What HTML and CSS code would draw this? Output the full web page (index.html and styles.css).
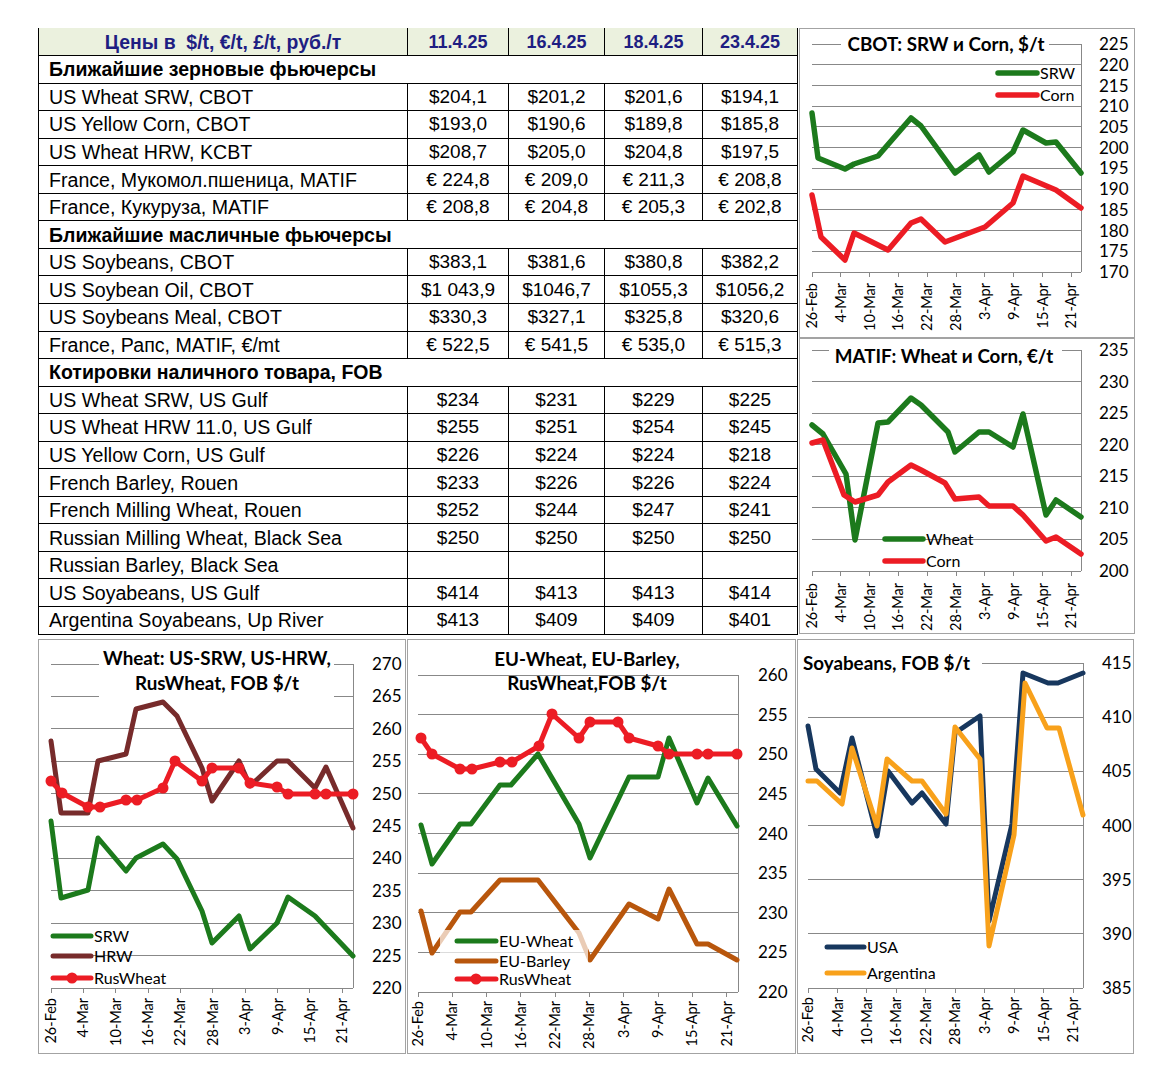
FILE: index.html
```html
<!DOCTYPE html>
<html lang="ru">
<head>
<meta charset="utf-8">
<title>Цены</title>
<link rel="stylesheet" href="styles.css">
</head>
<body>
<div class="page">
  <div class="top">
    <table class="prices">
      <colgroup>
        <col class="c-label"><col class="c1"><col class="c2"><col class="c3"><col class="c4">
      </colgroup>
      <tr class="head">
        <th class="head-label">Цены в&nbsp; $/t, €/t, £/t, руб./т</th>
        <th>11.4.25</th><th>16.4.25</th><th>18.4.25</th><th>23.4.25</th>
      </tr>
      <tr class="section"><td colspan="5">Ближайшие зерновые фьючерсы</td></tr>
      <tr><td>US Wheat SRW, CBOT</td><td>$204,1</td><td>$201,2</td><td>$201,6</td><td>$194,1</td></tr>
      <tr><td>US Yellow Corn, CBOT</td><td>$193,0</td><td>$190,6</td><td>$189,8</td><td>$185,8</td></tr>
      <tr><td>US Wheat HRW, KCBT</td><td>$208,7</td><td>$205,0</td><td>$204,8</td><td>$197,5</td></tr>
      <tr><td>France, Мукомол.пшеница, MATIF</td><td>€ 224,8</td><td>€ 209,0</td><td>€ 211,3</td><td>€ 208,8</td></tr>
      <tr><td>France, Кукуруза, MATIF</td><td>€ 208,8</td><td>€ 204,8</td><td>€ 205,3</td><td>€ 202,8</td></tr>
      <tr class="section"><td colspan="5">Ближайшие масличные фьючерсы</td></tr>
      <tr><td>US Soybeans, CBOT</td><td>$383,1</td><td>$381,6</td><td>$380,8</td><td>$382,2</td></tr>
      <tr><td>US Soybean Oil, CBOT</td><td>$1 043,9</td><td>$1046,7</td><td>$1055,3</td><td>$1056,2</td></tr>
      <tr><td>US Soybeans Meal, CBOT</td><td>$330,3</td><td>$327,1</td><td>$325,8</td><td>$320,6</td></tr>
      <tr><td>France, Рапс, MATIF, €/mt</td><td>€ 522,5</td><td>€ 541,5</td><td>€ 535,0</td><td>€ 515,3</td></tr>
      <tr class="section"><td colspan="5">Котировки наличного товара, FOB</td></tr>
      <tr><td>US Wheat SRW, US Gulf</td><td>$234</td><td>$231</td><td>$229</td><td>$225</td></tr>
      <tr><td>US Wheat HRW 11.0, US Gulf</td><td>$255</td><td>$251</td><td>$254</td><td>$245</td></tr>
      <tr><td>US Yellow Corn, US Gulf</td><td>$226</td><td>$224</td><td>$224</td><td>$218</td></tr>
      <tr><td>French Barley, Rouen</td><td>$233</td><td>$226</td><td>$226</td><td>$224</td></tr>
      <tr><td>French Milling Wheat, Rouen</td><td>$252</td><td>$244</td><td>$247</td><td>$241</td></tr>
      <tr><td>Russian Milling Wheat, Black Sea</td><td>$250</td><td>$250</td><td>$250</td><td>$250</td></tr>
      <tr><td>Russian Barley, Black Sea</td><td></td><td></td><td></td><td></td></tr>
      <tr><td>US Soyabeans, US Gulf</td><td>$414</td><td>$413</td><td>$413</td><td>$414</td></tr>
      <tr><td>Argentina Soyabeans, Up River</td><td>$413</td><td>$409</td><td>$409</td><td>$401</td></tr>
    </table>

    <div class="side">
      <div class="chart chart-cbot">
        <svg width="334" height="308" viewBox="799 29 334 308">
          <g class="grid">
            <line x1="811" x2="840" y1="44" y2="44"/><line x1="1048" x2="1080" y1="44" y2="44"/>
            <line x1="811" x2="1080" y1="64.7" y2="64.7"/>
            <line x1="811" x2="1080" y1="85.5" y2="85.5"/>
            <line x1="811" x2="1080" y1="106.2" y2="106.2"/>
            <line x1="811" x2="1080" y1="126.9" y2="126.9"/>
            <line x1="811" x2="1080" y1="147.6" y2="147.6"/>
            <line x1="811" x2="1080" y1="168.4" y2="168.4"/>
            <line x1="811" x2="1080" y1="189.1" y2="189.1"/>
            <line x1="811" x2="1080" y1="209.8" y2="209.8"/>
            <line x1="811" x2="1080" y1="230.5" y2="230.5"/>
            <line x1="811" x2="1080" y1="251.3" y2="251.3"/>
            <line x1="811" x2="1080" y1="272" y2="272"/>
            <line x1="1080" x2="1080" y1="44" y2="272"/>
            <line x1="811" x2="811" y1="272" y2="277"/><line x1="839.8" x2="839.8" y1="272" y2="277"/>
            <line x1="868.6" x2="868.6" y1="272" y2="277"/><line x1="897.4" x2="897.4" y1="272" y2="277"/>
            <line x1="926.3" x2="926.3" y1="272" y2="277"/><line x1="955.1" x2="955.1" y1="272" y2="277"/>
            <line x1="983.9" x2="983.9" y1="272" y2="277"/><line x1="1012.7" x2="1012.7" y1="272" y2="277"/>
            <line x1="1041.5" x2="1041.5" y1="272" y2="277"/><line x1="1070.4" x2="1070.4" y1="272" y2="277"/>
          </g>
          <text class="ttl" x="945" y="51" text-anchor="middle">CBOT: SRW и Corn, $/t</text>
          <g class="yl">
            <text x="1098" y="50">225</text><text x="1098" y="70.7">220</text><text x="1098" y="91.5">215</text>
            <text x="1098" y="112.2">210</text><text x="1098" y="132.9">205</text><text x="1098" y="153.6">200</text>
            <text x="1098" y="174.4">195</text><text x="1098" y="195.1">190</text><text x="1098" y="215.8">185</text>
            <text x="1098" y="236.5">180</text><text x="1098" y="257.3">175</text><text x="1098" y="278">170</text>
          </g>
          <g class="xl" text-anchor="end">
            <text transform="translate(816,283) rotate(-90)">26-Feb</text>
            <text transform="translate(844.8,283) rotate(-90)">4-Mar</text>
            <text transform="translate(873.6,283) rotate(-90)">10-Mar</text>
            <text transform="translate(902.4,283) rotate(-90)">16-Mar</text>
            <text transform="translate(931.3,283) rotate(-90)">22-Mar</text>
            <text transform="translate(960.1,283) rotate(-90)">28-Mar</text>
            <text transform="translate(988.9,283) rotate(-90)">3-Apr</text>
            <text transform="translate(1017.7,283) rotate(-90)">9-Apr</text>
            <text transform="translate(1046.5,283) rotate(-90)">15-Apr</text>
            <text transform="translate(1075.4,283) rotate(-90)">21-Apr</text>
          </g>
          <polyline class="s green" points="811,113 817,158 844,169 853,164 877,156 910,118 920,126 954,173 978,155 988,172 1012,152 1022,130 1045,143 1055,142 1080,173"/>
          <polyline class="s red" points="811,195 820,237 844,260 853,233 887,250 910,223 920,219 944,242 984,227 1012,203 1022,176 1055,190 1080,208"/>
          <line class="s green" x1="997" x2="1036" y1="73" y2="73"/>
          <line class="s red" x1="997" x2="1036" y1="95" y2="95"/>
          <g class="lg"><text x="1039" y="79">SRW</text><text x="1039" y="101">Corn</text></g>
        </svg>
      </div>
      <div class="chart chart-matif">
        <svg width="334" height="294" viewBox="799 339 334 294">
          <g class="grid">
            <line x1="811" x2="828" y1="350" y2="350"/><line x1="1061" x2="1080" y1="350" y2="350"/>
            <line x1="811" x2="1080" y1="381.6" y2="381.6"/>
            <line x1="811" x2="1080" y1="413.1" y2="413.1"/>
            <line x1="811" x2="1080" y1="444.7" y2="444.7"/>
            <line x1="811" x2="1080" y1="476.3" y2="476.3"/>
            <line x1="811" x2="1080" y1="507.8" y2="507.8"/>
            <line x1="811" x2="1080" y1="539.4" y2="539.4"/>
            <line x1="811" x2="1080" y1="571" y2="571"/>
            <line x1="1080" x2="1080" y1="350" y2="571"/>
            <line x1="811" x2="811" y1="571" y2="576"/><line x1="839.8" x2="839.8" y1="571" y2="576"/>
            <line x1="868.6" x2="868.6" y1="571" y2="576"/><line x1="897.4" x2="897.4" y1="571" y2="576"/>
            <line x1="926.3" x2="926.3" y1="571" y2="576"/><line x1="955.1" x2="955.1" y1="571" y2="576"/>
            <line x1="983.9" x2="983.9" y1="571" y2="576"/><line x1="1012.7" x2="1012.7" y1="571" y2="576"/>
            <line x1="1041.5" x2="1041.5" y1="571" y2="576"/><line x1="1070.4" x2="1070.4" y1="571" y2="576"/>
          </g>
          <text class="ttl" x="943" y="363" text-anchor="middle">MATIF: Wheat и Corn, €/t</text>
          <g class="yl">
            <text x="1098" y="356">235</text><text x="1098" y="387.6">230</text><text x="1098" y="419.1">225</text>
            <text x="1098" y="450.7">220</text><text x="1098" y="482.3">215</text><text x="1098" y="513.8">210</text>
            <text x="1098" y="545.4">205</text><text x="1098" y="577">200</text>
          </g>
          <g class="xl" text-anchor="end">
            <text transform="translate(816,583) rotate(-90)">26-Feb</text>
            <text transform="translate(844.8,583) rotate(-90)">4-Mar</text>
            <text transform="translate(873.6,583) rotate(-90)">10-Mar</text>
            <text transform="translate(902.4,583) rotate(-90)">16-Mar</text>
            <text transform="translate(931.3,583) rotate(-90)">22-Mar</text>
            <text transform="translate(960.1,583) rotate(-90)">28-Mar</text>
            <text transform="translate(988.9,583) rotate(-90)">3-Apr</text>
            <text transform="translate(1017.7,583) rotate(-90)">9-Apr</text>
            <text transform="translate(1046.5,583) rotate(-90)">15-Apr</text>
            <text transform="translate(1075.4,583) rotate(-90)">21-Apr</text>
          </g>
          <polyline class="s green" points="811,425 822,434 845,474 854,540 877,423 887,422 910,398 920,405 947,432 954,452 978,432 988,432 1012,447 1022,414 1045,515 1055,500 1080,517"/>
          <polyline class="s red" points="811,443 822,440 843,495 854,502 877,495 887,482 910,465 920,470 944,483 954,499 978,497 988,506 1012,506 1022,515 1045,541 1055,537 1080,554"/>
          <line class="s green" x1="884" x2="922" y1="539" y2="539"/>
          <line class="s red" x1="884" x2="922" y1="561" y2="561"/>
          <g class="lg"><text x="925" y="545">Wheat</text><text x="925" y="567">Corn</text></g>
        </svg>
      </div>
    </div>
  </div>

  <div class="bottom">
    <div class="chart chart-wheat">
      <svg width="366" height="413" viewBox="39 639 366 413">
        <g class="grid">
          <line x1="51" x2="99" y1="663" y2="663"/><line x1="334" x2="353" y1="663" y2="663"/>
          <line x1="51" x2="99" y1="695.4" y2="695.4"/><line x1="334" x2="353" y1="695.4" y2="695.4"/>
          <line x1="51" x2="353" y1="727.8" y2="727.8"/>
          <line x1="51" x2="353" y1="760.2" y2="760.2"/>
          <line x1="51" x2="353" y1="792.6" y2="792.6"/>
          <line x1="51" x2="353" y1="825" y2="825"/>
          <line x1="51" x2="353" y1="857.4" y2="857.4"/>
          <line x1="51" x2="353" y1="889.8" y2="889.8"/>
          <line x1="51" x2="353" y1="922.2" y2="922.2"/>
          <line x1="51" x2="353" y1="954.6" y2="954.6"/>
          <line x1="51" x2="353" y1="987" y2="987"/>
          <line x1="353" x2="353" y1="663" y2="987"/>
          <line x1="51" x2="51" y1="987" y2="992"/><line x1="83.4" x2="83.4" y1="987" y2="992"/>
          <line x1="115.7" x2="115.7" y1="987" y2="992"/><line x1="148.1" x2="148.1" y1="987" y2="992"/>
          <line x1="180.4" x2="180.4" y1="987" y2="992"/><line x1="212.8" x2="212.8" y1="987" y2="992"/>
          <line x1="245.1" x2="245.1" y1="987" y2="992"/><line x1="277.5" x2="277.5" y1="987" y2="992"/>
          <line x1="309.9" x2="309.9" y1="987" y2="992"/><line x1="342.2" x2="342.2" y1="987" y2="992"/>
        </g>
        <text class="ttl" x="217" y="664" text-anchor="middle">Wheat: US-SRW, US-HRW,</text>
        <text class="ttl" x="217" y="689" text-anchor="middle">RusWheat, FOB $/t</text>
        <g class="yl">
          <text x="372" y="669">270</text><text x="372" y="701.4">265</text><text x="372" y="733.8">260</text>
          <text x="372" y="766.2">255</text><text x="372" y="798.6">250</text><text x="372" y="831">245</text>
          <text x="372" y="863.4">240</text><text x="372" y="895.8">235</text><text x="372" y="928.2">230</text>
          <text x="372" y="960.6">225</text><text x="372" y="993">220</text>
        </g>
        <g class="xl" text-anchor="end">
          <text transform="translate(56,997) rotate(-90)">26-Feb</text>
          <text transform="translate(88.4,997) rotate(-90)">4-Mar</text>
          <text transform="translate(120.7,997) rotate(-90)">10-Mar</text>
          <text transform="translate(153.1,997) rotate(-90)">16-Mar</text>
          <text transform="translate(185.4,997) rotate(-90)">22-Mar</text>
          <text transform="translate(217.8,997) rotate(-90)">28-Mar</text>
          <text transform="translate(250.1,997) rotate(-90)">3-Apr</text>
          <text transform="translate(282.5,997) rotate(-90)">9-Apr</text>
          <text transform="translate(314.9,997) rotate(-90)">15-Apr</text>
          <text transform="translate(347.2,997) rotate(-90)">21-Apr</text>
        </g>
        <polyline class="s green thin" points="51,820 61,897 88,889 98,837 126,870 136,857 163,843 177,858 202,910 212,942 239,915 250,948 277,922 288,896 315,915 353,955"/>
        <polyline class="s brown thin" points="51,740 61,812 88,812 98,760 126,753 136,708 163,701 177,715 202,767 212,800 239,760 250,785 277,760 288,760 315,787 326,766 353,827"/>
        <polyline class="s red thin" points="51,780 62,792 88,806 100,806 126,799 137,799 163,787 175,760 202,780 212,767 239,767 250,782 277,786 288,793 315,793 326,793 353,793"/>
        <g class="dots">
          <circle cx="51" cy="780" r="5.5"/><circle cx="62" cy="792" r="5.5"/><circle cx="88" cy="806" r="5.5"/>
          <circle cx="100" cy="806" r="5.5"/><circle cx="126" cy="799" r="5.5"/><circle cx="137" cy="799" r="5.5"/>
          <circle cx="163" cy="787" r="5.5"/><circle cx="175" cy="760" r="5.5"/><circle cx="202" cy="780" r="5.5"/>
          <circle cx="212" cy="767" r="5.5"/><circle cx="239" cy="767" r="5.5"/><circle cx="250" cy="782" r="5.5"/>
          <circle cx="277" cy="786" r="5.5"/><circle cx="288" cy="793" r="5.5"/><circle cx="315" cy="793" r="5.5"/>
          <circle cx="326" cy="793" r="5.5"/><circle cx="353" cy="793" r="5.5"/>
          <circle cx="72" cy="977" r="5.5"/>
        </g>
        <line class="s green thin" x1="53" x2="91" y1="935" y2="935"/>
        <line class="s brown thin" x1="53" x2="91" y1="955" y2="955"/>
        <line class="s red thin" x1="53" x2="91" y1="977" y2="977"/>
        <g class="lg"><text x="94" y="941">SRW</text><text x="94" y="961">HRW</text><text x="94" y="983">RusWheat</text></g>
      </svg>
    </div>

    <div class="chart chart-eu">
      <svg width="387" height="413" viewBox="408 639 387 413">
        <g class="grid">
          <line x1="418" x2="738" y1="674" y2="674"/>
          <line x1="418" x2="738" y1="713.6" y2="713.6"/>
          <line x1="418" x2="738" y1="753.3" y2="753.3"/>
          <line x1="418" x2="738" y1="792.9" y2="792.9"/>
          <line x1="418" x2="738" y1="832.5" y2="832.5"/>
          <line x1="418" x2="738" y1="872.1" y2="872.1"/>
          <line x1="418" x2="738" y1="911.8" y2="911.8"/>
          <line x1="418" x2="738" y1="951.4" y2="951.4"/>
          <line x1="418" x2="738" y1="991" y2="991"/>
          <line x1="738" x2="738" y1="674" y2="991"/>
          <line x1="418" x2="418" y1="991" y2="996"/><line x1="452.3" x2="452.3" y1="991" y2="996"/>
          <line x1="486.6" x2="486.6" y1="991" y2="996"/><line x1="520.9" x2="520.9" y1="991" y2="996"/>
          <line x1="555.1" x2="555.1" y1="991" y2="996"/><line x1="589.4" x2="589.4" y1="991" y2="996"/>
          <line x1="623.7" x2="623.7" y1="991" y2="996"/><line x1="658" x2="658" y1="991" y2="996"/>
          <line x1="692.3" x2="692.3" y1="991" y2="996"/><line x1="726.6" x2="726.6" y1="991" y2="996"/>
        </g>
        <text class="ttl" x="587" y="665" text-anchor="middle">EU-Wheat, EU-Barley,</text>
        <text class="ttl" x="587" y="689" text-anchor="middle">RusWheat,FOB $/t</text>
        <g class="yl">
          <text x="758" y="680">260</text><text x="758" y="719.6">255</text><text x="758" y="759.3">250</text>
          <text x="758" y="798.9">245</text><text x="758" y="838.5">240</text><text x="758" y="878.1">235</text>
          <text x="758" y="917.8">230</text><text x="758" y="957.4">225</text><text x="758" y="997">220</text>
        </g>
        <g class="xl" text-anchor="end">
          <text transform="translate(423,1000) rotate(-90)">26-Feb</text>
          <text transform="translate(457.3,1000) rotate(-90)">4-Mar</text>
          <text transform="translate(491.6,1000) rotate(-90)">10-Mar</text>
          <text transform="translate(525.9,1000) rotate(-90)">16-Mar</text>
          <text transform="translate(560.1,1000) rotate(-90)">22-Mar</text>
          <text transform="translate(594.4,1000) rotate(-90)">28-Mar</text>
          <text transform="translate(628.7,1000) rotate(-90)">3-Apr</text>
          <text transform="translate(663,1000) rotate(-90)">9-Apr</text>
          <text transform="translate(697.3,1000) rotate(-90)">15-Apr</text>
          <text transform="translate(731.6,1000) rotate(-90)">21-Apr</text>
        </g>
        <polyline class="s green thin" points="421,824 432,863 460,823 471,823 500,784 511,784 538,753 552,777 579,823 590,857 629,776 658,776 669,737 697,802 708,777 737,825"/>
        <polyline class="s barley thin" points="421,910 432,952 460,911 471,911 500,879 538,879 579,932 590,959 629,903 658,918 669,888 697,943 708,943 737,959"/>
        <polyline class="s red thin" points="421,737 432,753 460,768 472,768 500,761 512,761 539,745 552,713 579,737 590,721 618,721 629,737 658,745 669,753 697,753 708,753 737,753"/>
        <g class="dots">
          <circle cx="421" cy="737" r="5.5"/><circle cx="432" cy="753" r="5.5"/><circle cx="460" cy="768" r="5.5"/>
          <circle cx="472" cy="768" r="5.5"/><circle cx="500" cy="761" r="5.5"/><circle cx="512" cy="761" r="5.5"/>
          <circle cx="539" cy="745" r="5.5"/><circle cx="552" cy="713" r="5.5"/><circle cx="579" cy="737" r="5.5"/>
          <circle cx="590" cy="721" r="5.5"/><circle cx="618" cy="721" r="5.5"/><circle cx="629" cy="737" r="5.5"/>
          <circle cx="658" cy="745" r="5.5"/><circle cx="669" cy="753" r="5.5"/><circle cx="697" cy="753" r="5.5"/>
          <circle cx="708" cy="753" r="5.5"/><circle cx="737" cy="753" r="5.5"/>
        </g>
        <rect class="veil" x="440" y="929" width="148" height="58"/>
        <line class="s green thin" x1="457" x2="496" y1="940" y2="940"/>
        <line class="s barley thin" x1="457" x2="496" y1="960" y2="960"/>
        <line class="s red thin" x1="457" x2="496" y1="978" y2="978"/>
        <circle class="dot" cx="476" cy="978" r="5.5"/>
        <g class="lg"><text x="499" y="946">EU-Wheat</text><text x="499" y="966">EU-Barley</text><text x="499" y="984">RusWheat</text></g>
      </svg>
    </div>

    <div class="chart chart-soy">
      <svg width="335" height="413" viewBox="798 639 335 413">
        <g class="grid">
          <line x1="982" x2="1083" y1="662" y2="662"/>
          <line x1="808" x2="1083" y1="716.2" y2="716.2"/>
          <line x1="808" x2="1083" y1="770.3" y2="770.3"/>
          <line x1="808" x2="1083" y1="824.5" y2="824.5"/>
          <line x1="808" x2="1083" y1="878.7" y2="878.7"/>
          <line x1="808" x2="1083" y1="932.8" y2="932.8"/>
          <line x1="808" x2="1083" y1="987" y2="987"/>
          <line x1="1083" x2="1083" y1="662" y2="987"/>
          <line x1="808" x2="808" y1="987" y2="992"/><line x1="837.5" x2="837.5" y1="987" y2="992"/>
          <line x1="866.9" x2="866.9" y1="987" y2="992"/><line x1="896.4" x2="896.4" y1="987" y2="992"/>
          <line x1="925.9" x2="925.9" y1="987" y2="992"/><line x1="955.4" x2="955.4" y1="987" y2="992"/>
          <line x1="984.7" x2="984.7" y1="987" y2="992"/><line x1="1014.1" x2="1014.1" y1="987" y2="992"/>
          <line x1="1043.6" x2="1043.6" y1="987" y2="992"/><line x1="1073" x2="1073" y1="987" y2="992"/>
        </g>
        <text class="ttl" x="803" y="669">Soyabeans, FOB $/t</text>
        <g class="yl">
          <text x="1102" y="668">415</text><text x="1102" y="722.2">410</text><text x="1102" y="776.3">405</text>
          <text x="1102" y="830.5">400</text><text x="1102" y="884.7">395</text><text x="1102" y="938.8">390</text>
          <text x="1102" y="993">385</text>
        </g>
        <g class="xl" text-anchor="end">
          <text transform="translate(813,996) rotate(-90)">26-Feb</text>
          <text transform="translate(842.5,996) rotate(-90)">4-Mar</text>
          <text transform="translate(871.9,996) rotate(-90)">10-Mar</text>
          <text transform="translate(901.4,996) rotate(-90)">16-Mar</text>
          <text transform="translate(930.9,996) rotate(-90)">22-Mar</text>
          <text transform="translate(960.4,996) rotate(-90)">28-Mar</text>
          <text transform="translate(989.7,996) rotate(-90)">3-Apr</text>
          <text transform="translate(1019.1,996) rotate(-90)">9-Apr</text>
          <text transform="translate(1048.6,996) rotate(-90)">15-Apr</text>
          <text transform="translate(1078,996) rotate(-90)">21-Apr</text>
        </g>
        <polyline class="s navy thin" points="808,725 816,768 840,792 852,737 877,835 888,770 912,802 922,792 946,823 955,732 980,715 989,920 1012,823 1023,672 1048,682 1058,682 1083,672"/>
        <polyline class="s orange thin" points="808,780 817,780 842,803 852,747 877,825 887,758 912,780 922,780 946,813 955,726 980,758 989,945 1014,834 1025,682 1047,727 1059,727 1083,814"/>
        <line class="s navy thin" x1="827" x2="864" y1="946" y2="946"/>
        <line class="s orange thin" x1="827" x2="864" y1="972" y2="972"/>
        <g class="lg"><text x="867" y="952">USA</text><text x="867" y="978">Argentina</text></g>
      </svg>
    </div>
  </div>
</div>
</body>
</html>
```

FILE: styles.css
```css
html, body {
  margin: 0;
  padding: 0;
  background: #ffffff;
}

.page {
  padding: 28px 0 0 38px;
  font-family: "Liberation Sans", Arial, sans-serif;
  color: #000;
}

.top {
  display: flex;
  align-items: flex-start;
}

/* ---------- price table ---------- */
.prices {
  border-collapse: collapse;
  table-layout: fixed;
  width: 759px;
  font-size: 19px;
}

.c-label { width: 369px; }
.c1 { width: 101px; }
.c2 { width: 96px; }
.c3 { width: 98px; }
.c4 { width: 95px; }

.prices tr {
  height: 27.55px;
}

.prices td,
.prices th {
  border: 1px solid #000;
  padding: 0;
  text-align: center;
  white-space: nowrap;
  line-height: 20px;
}

.prices td:first-child {
  text-align: left;
  padding-left: 10px;
  font-size: 19.6px;
}

.head th {
  background: #ebf1de;
  color: #1e1e82;
  font-weight: bold;
  font-size: 18px;
  border-top: none;
}

.head th.head-label {
  text-align: center;
  font-size: 19.4px;
}

.section td {
  font-weight: bold;
}

.prices .section td:first-child {
  font-size: 19.5px;
}

/* ---------- chart frames ---------- */
.side {
  display: flex;
  flex-direction: column;
  margin-left: 1px;
}

.chart {
  border: 1px solid #a3a3a3;
  background: #fff;
  box-sizing: border-box;
}

.chart svg {
  display: block;
}

.chart-cbot { width: 336px; height: 310px; }
.chart-matif { width: 336px; height: 296px; }

.bottom {
  display: flex;
  margin-top: 4px;
  gap: 1px;
}

.chart-wheat { width: 368px; height: 415px; }
.chart-eu { width: 389px; height: 415px; }
.chart-soy { width: 337px; height: 415px; }

/* ---------- chart drawing ---------- */
.grid line {
  stroke: #888888;
  stroke-width: 1;
  shape-rendering: crispEdges;
}

.ttl {
  font-family: Lato, "Open Sans", sans-serif;
  font-weight: bold;
  font-size: 18.8px;
  fill: #000;
}

.yl text {
  font-family: Lato, "Open Sans", sans-serif;
  font-size: 17px;
  fill: #000;
}

.xl text {
  font-family: Lato, "Open Sans", sans-serif;
  font-size: 14.5px;
  fill: #000;
}

.lg text {
  font-family: Lato, "Open Sans", sans-serif;
  font-size: 16px;
  fill: #000;
}

.s {
  fill: none;
  stroke-width: 5.5;
  stroke-linejoin: round;
  stroke-linecap: round;
}

.s.thin { stroke-width: 5; }

.green { stroke: #1c7a1c; }
.red { stroke: #ec1c24; }
.brown { stroke: #772b2b; }
.barley { stroke: #b8560c; }
.navy { stroke: #17375e; }
.orange { stroke: #f8a11b; }

.dots circle,
.dot {
  fill: #ec1c24;
}

.veil {
  fill: #ffffff;
  opacity: 0.7;
}
```
